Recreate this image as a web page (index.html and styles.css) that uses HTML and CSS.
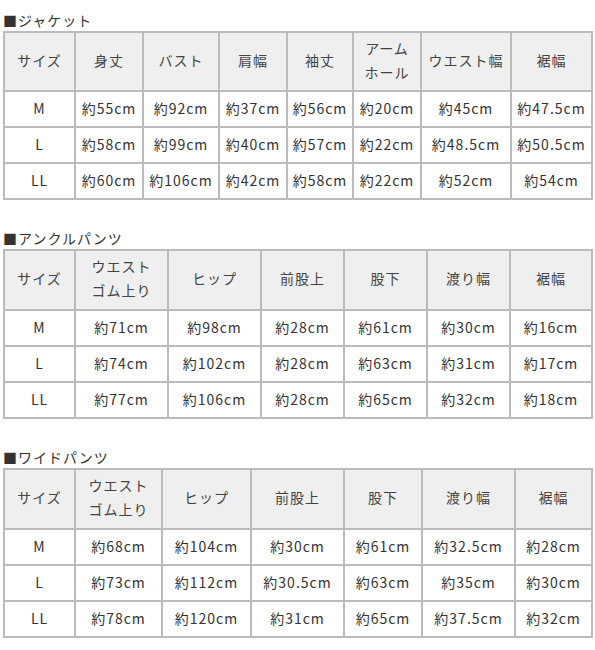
FILE: index.html
```html
<!DOCTYPE html>
<html lang="ja">
<head>
<meta charset="utf-8">
<link rel="stylesheet" href="styles.css">
</head>
<body>
<div class="page">
  <section class="chart">
    <h2 class="title">■ジャケット</h2>
    <div class="grid g-jacket">
      <div class="cell head">サイズ</div>
      <div class="cell head">身丈</div>
      <div class="cell head">バスト</div>
      <div class="cell head">肩幅</div>
      <div class="cell head">袖丈</div>
      <div class="cell head">アーム<br>ホール</div>
      <div class="cell head">ウエスト幅</div>
      <div class="cell head">裾幅</div>

      <div class="cell">M</div>
      <div class="cell">約55cm</div>
      <div class="cell">約92cm</div>
      <div class="cell">約37cm</div>
      <div class="cell">約56cm</div>
      <div class="cell">約20cm</div>
      <div class="cell">約45cm</div>
      <div class="cell">約47.5cm</div>

      <div class="cell">L</div>
      <div class="cell">約58cm</div>
      <div class="cell">約99cm</div>
      <div class="cell">約40cm</div>
      <div class="cell">約57cm</div>
      <div class="cell">約22cm</div>
      <div class="cell">約48.5cm</div>
      <div class="cell">約50.5cm</div>

      <div class="cell">LL</div>
      <div class="cell">約60cm</div>
      <div class="cell">約106cm</div>
      <div class="cell">約42cm</div>
      <div class="cell">約58cm</div>
      <div class="cell">約22cm</div>
      <div class="cell">約52cm</div>
      <div class="cell">約54cm</div>
    </div>
  </section>

  <section class="chart">
    <h2 class="title">■アンクルパンツ</h2>
    <div class="grid g-ankle">
      <div class="cell head">サイズ</div>
      <div class="cell head">ウエスト<br>ゴム上り</div>
      <div class="cell head">ヒップ</div>
      <div class="cell head">前股上</div>
      <div class="cell head">股下</div>
      <div class="cell head">渡り幅</div>
      <div class="cell head">裾幅</div>

      <div class="cell">M</div>
      <div class="cell">約71cm</div>
      <div class="cell">約98cm</div>
      <div class="cell">約28cm</div>
      <div class="cell">約61cm</div>
      <div class="cell">約30cm</div>
      <div class="cell">約16cm</div>

      <div class="cell">L</div>
      <div class="cell">約74cm</div>
      <div class="cell">約102cm</div>
      <div class="cell">約28cm</div>
      <div class="cell">約63cm</div>
      <div class="cell">約31cm</div>
      <div class="cell">約17cm</div>

      <div class="cell">LL</div>
      <div class="cell">約77cm</div>
      <div class="cell">約106cm</div>
      <div class="cell">約28cm</div>
      <div class="cell">約65cm</div>
      <div class="cell">約32cm</div>
      <div class="cell">約18cm</div>
    </div>
  </section>

  <section class="chart">
    <h2 class="title">■ワイドパンツ</h2>
    <div class="grid g-wide">
      <div class="cell head">サイズ</div>
      <div class="cell head">ウエスト<br>ゴム上り</div>
      <div class="cell head">ヒップ</div>
      <div class="cell head">前股上</div>
      <div class="cell head">股下</div>
      <div class="cell head">渡り幅</div>
      <div class="cell head">裾幅</div>

      <div class="cell">M</div>
      <div class="cell">約68cm</div>
      <div class="cell">約104cm</div>
      <div class="cell">約30cm</div>
      <div class="cell">約61cm</div>
      <div class="cell">約32.5cm</div>
      <div class="cell">約28cm</div>

      <div class="cell">L</div>
      <div class="cell">約73cm</div>
      <div class="cell">約112cm</div>
      <div class="cell">約30.5cm</div>
      <div class="cell">約63cm</div>
      <div class="cell">約35cm</div>
      <div class="cell">約30cm</div>

      <div class="cell">LL</div>
      <div class="cell">約78cm</div>
      <div class="cell">約120cm</div>
      <div class="cell">約31cm</div>
      <div class="cell">約65cm</div>
      <div class="cell">約37.5cm</div>
      <div class="cell">約32cm</div>
    </div>
  </section>
</div>
</body>
</html>
```

FILE: styles.css
```css
html, body {
  margin: 0;
  padding: 0;
  background: #ffffff;
}

body {
  font-family: "Noto Sans CJK JP", "Noto Sans", sans-serif;
  color: #333333;
}

.page {
  padding: 10px 2px 0 3px;
}

.chart {
  margin-bottom: 28px;
}

.title {
  margin: 0;
  font-size: 14px;
  font-weight: normal;
  line-height: 21px;
  letter-spacing: 1px;
  color: #333333;
}

.grid {
  display: grid;
  gap: 2px;
  padding: 2px;
  background: #bbbbbb;
  width: 590px;
  box-sizing: border-box;
  grid-template-rows: 58px 34px 34px 34px;
}

.g-jacket {
  grid-template-columns: 69px 66px 74px 66px 64px 66px 88px 79px;
  grid-template-rows: 57px 34px 34px 34px;
}

.g-ankle {
  grid-template-columns: 69px 91px 91px 81px 81px 81px 80px;
}

.g-wide {
  grid-template-columns: 69px 85px 87px 91px 76px 91px 75px;
}

.cell {
  background: #ffffff;
  display: flex;
  align-items: center;
  justify-content: center;
  text-align: center;
  font-size: 14px;
  line-height: 24px;
  letter-spacing: 1px;
  padding-bottom: 2px;
  color: #333333;
}

.head {
  background: #efefef;
  color: #444444;
  padding-bottom: 4px;
}
```
